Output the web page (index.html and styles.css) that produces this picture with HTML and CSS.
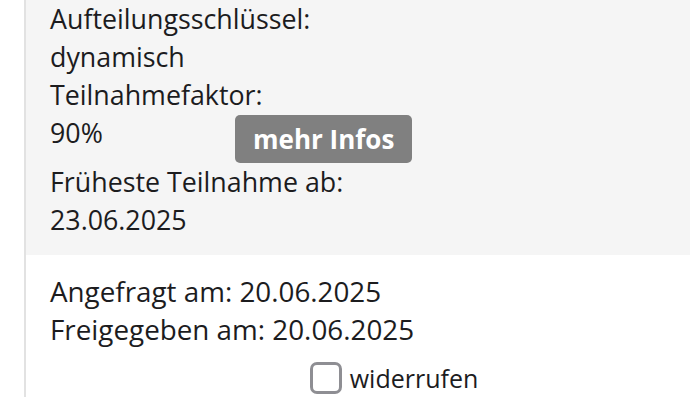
FILE: index.html
```html
<!DOCTYPE html>
<html lang="de">
<head>
    <meta charset="UTF-8">
    <meta name="viewport" content="width=device-width, initial-scale=1.0">
    <title>Teilnahme</title>
    <link rel="stylesheet" href="styles.css">
</head>
<body>
    <div class="card">
        <div class="details">
            <div class="label">Aufteilungsschlüssel:</div>
            <div class="value">dynamisch</div>
            <div class="label strong">Teilnahmefaktor:</div>
            <div class="value-row">
                <span class="value-col">90%</span>
                <button class="info-btn">mehr Infos</button>
            </div>
            <div class="label">Früheste Teilnahme ab:</div>
            <div class="value">23.06.2025</div>
        </div>
        <div class="dates">
            <div class="date-line">Angefragt am: 20.06.2025</div>
            <div class="date-line">Freigegeben am: 20.06.2025</div>
            <label class="revoke">
                <input type="checkbox" class="revoke-box">
                <span>widerrufen</span>
            </label>
        </div>
    </div>
</body>
</html>
```

FILE: styles.css
```css
body {
    margin: 0;
    overflow: hidden;
    background-color: #fff;
    font-family: "Open Sans", "Noto Sans", sans-serif;
    font-size: 26.8px;
    line-height: 38px;
    color: #1c1c1e;
}
.card {
    width: 712px;
    margin-left: 24px;
    border-left: 2px solid #e2e2e2;
}
.details {
    background-color: #f5f5f5;
    padding: 0 0 16px 24px;
}
.strong {
    font-weight: 500;
}
.value-row {
    display: flex;
    align-items: flex-start;
}
.value-col {
    width: 185px;
}
.info-btn {
    margin-top: 1px;
    height: 48px;
    padding: 0 18px;
    border: none;
    border-radius: 5px;
    background-color: #808080;
    color: #fff;
    font-family: inherit;
    font-size: 26px;
    font-weight: 700;
}
.dates {
    padding: 17px 0 0 24px;
}
.date-line {
    font-size: 27.8px;
}
.revoke {
    display: flex;
    justify-content: center;
    align-items: center;
    gap: 8px;
    margin-top: 11px;
    font-size: 25px;
}
.revoke-box {
    appearance: none;
    width: 32px;
    height: 32px;
    margin: 0;
    border: 3px solid #8e8e93;
    border-radius: 7px;
    background-color: #fff;
}
```
